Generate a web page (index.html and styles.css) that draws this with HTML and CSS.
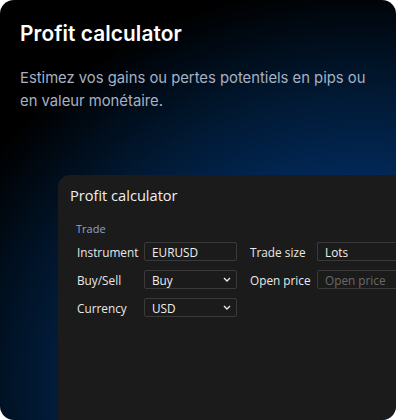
FILE: index.html
```html
<!DOCTYPE html>
<html lang="en">
<head>
    <meta charset="UTF-8">
    <meta name="viewport" content="width=device-width, initial-scale=1.0">
    <title>Profit calculator</title>
    <link rel="stylesheet" href="styles.css">
</head>
<body>
    <div class="card">
        <h1 class="card-title">Profit calculator</h1>
        <p class="card-text">Estimez vos gains ou pertes potentiels en pips ou en valeur monétaire.</p>

        <div class="calc-panel">
            <h2>Profit calculator</h2>
            <div class="section-label">Trade</div>
            <div class="calc-grid">
                <div class="calc-col">
                    <div class="form-row">
                        <label for="instrument">Instrument</label>
                        <input type="text" id="instrument" value="EURUSD">
                    </div>
                    <div class="form-row">
                        <label for="side">Buy/Sell</label>
                        <select id="side">
                            <option>Buy</option>
                            <option>Sell</option>
                        </select>
                    </div>
                    <div class="form-row">
                        <label for="currency">Currency</label>
                        <select id="currency">
                            <option>USD</option>
                            <option>EUR</option>
                        </select>
                    </div>
                </div>
                <div class="calc-col">
                    <div class="form-row">
                        <label for="tradeSize">Trade size</label>
                        <div class="fake-select">Lots</div>
                    </div>
                    <div class="form-row">
                        <label for="openPrice">Open price</label>
                        <input type="text" id="openPrice" placeholder="Open price">
                    </div>
                </div>
            </div>
        </div>
    </div>
</body>
</html>
```

FILE: styles.css
```css
body {
    margin: 0;
    background-color: #ffffff;
}
.card {
    width: 396px;
    height: 420px;
    border-radius: 14px;
    overflow: hidden;
    background: radial-gradient(ellipse 135% 115% at 92% 92%, #0b4080 0%, #06356c 25%, #02295a 42%, #011831 62%, #000000 84%);
    display: flex;
    flex-direction: column;
}
.card-title {
    font-family: Inter, sans-serif;
    font-weight: 600;
    font-size: 20.8px;
    color: #ffffff;
    margin: 20px 0 0 20px;
    line-height: 28px;
    letter-spacing: 0.1px;
}
.card-text {
    font-family: Inter, sans-serif;
    font-size: 14.8px;
    line-height: 23px;
    color: #a7b1c4;
    margin: 19px 20px 0 20px;
}
.calc-panel {
    flex: 1;
    margin: 62px 0 0 58px;
    width: 360px;
    background-color: #1b1b1b;
    border-radius: 12px 0 0 0;
    padding: 10px 0 0 12px;
    font-family: "Open Sans", sans-serif;
    color: #e8e8e8;
}
.calc-panel h2 {
    font-weight: 400;
    font-size: 14.6px;
    margin: 0;
    line-height: 20px;
    color: #f0f0f0;
}
.section-label {
    font-size: 11px;
    color: #8ea3d4;
    margin: 17px 0 0 6px;
    line-height: 14px;
}
.calc-grid {
    display: flex;
    gap: 13px;
    margin: 6px 0 0 7px;
}
.calc-col {
    display: flex;
    flex-direction: column;
    gap: 9px;
}
.form-row {
    display: flex;
    align-items: center;
    height: 19px;
}
.form-row label {
    width: 67px;
    font-size: 11.8px;
    color: #e8e8e8;
}
.form-row input,
.form-row select,
.fake-select {
    box-sizing: border-box;
    width: 93px;
    height: 19px;
    background-color: #1b1b1b;
    border: 1px solid #3a3a3a;
    border-radius: 2px;
    color: #f0f0f0;
    font-family: "Open Sans", sans-serif;
    font-size: 11.8px;
    padding: 0 7px;
    outline: none;
}
.form-row select {
    appearance: none;
    background-image: url("data:image/svg+xml,%3Csvg xmlns='http://www.w3.org/2000/svg' width='8' height='5' viewBox='0 0 8 5'%3E%3Cpath d='M1 1l3 3 3-3' fill='none' stroke='%23e8e8e8' stroke-width='1.4'/%3E%3C/svg%3E");
    background-repeat: no-repeat;
    background-position: right 5px center;
}
.fake-select {
    width: 90px;
    display: flex;
    align-items: center;
    border-right: none;
}
.form-row input::placeholder {
    color: #6a6a6a;
}
```
